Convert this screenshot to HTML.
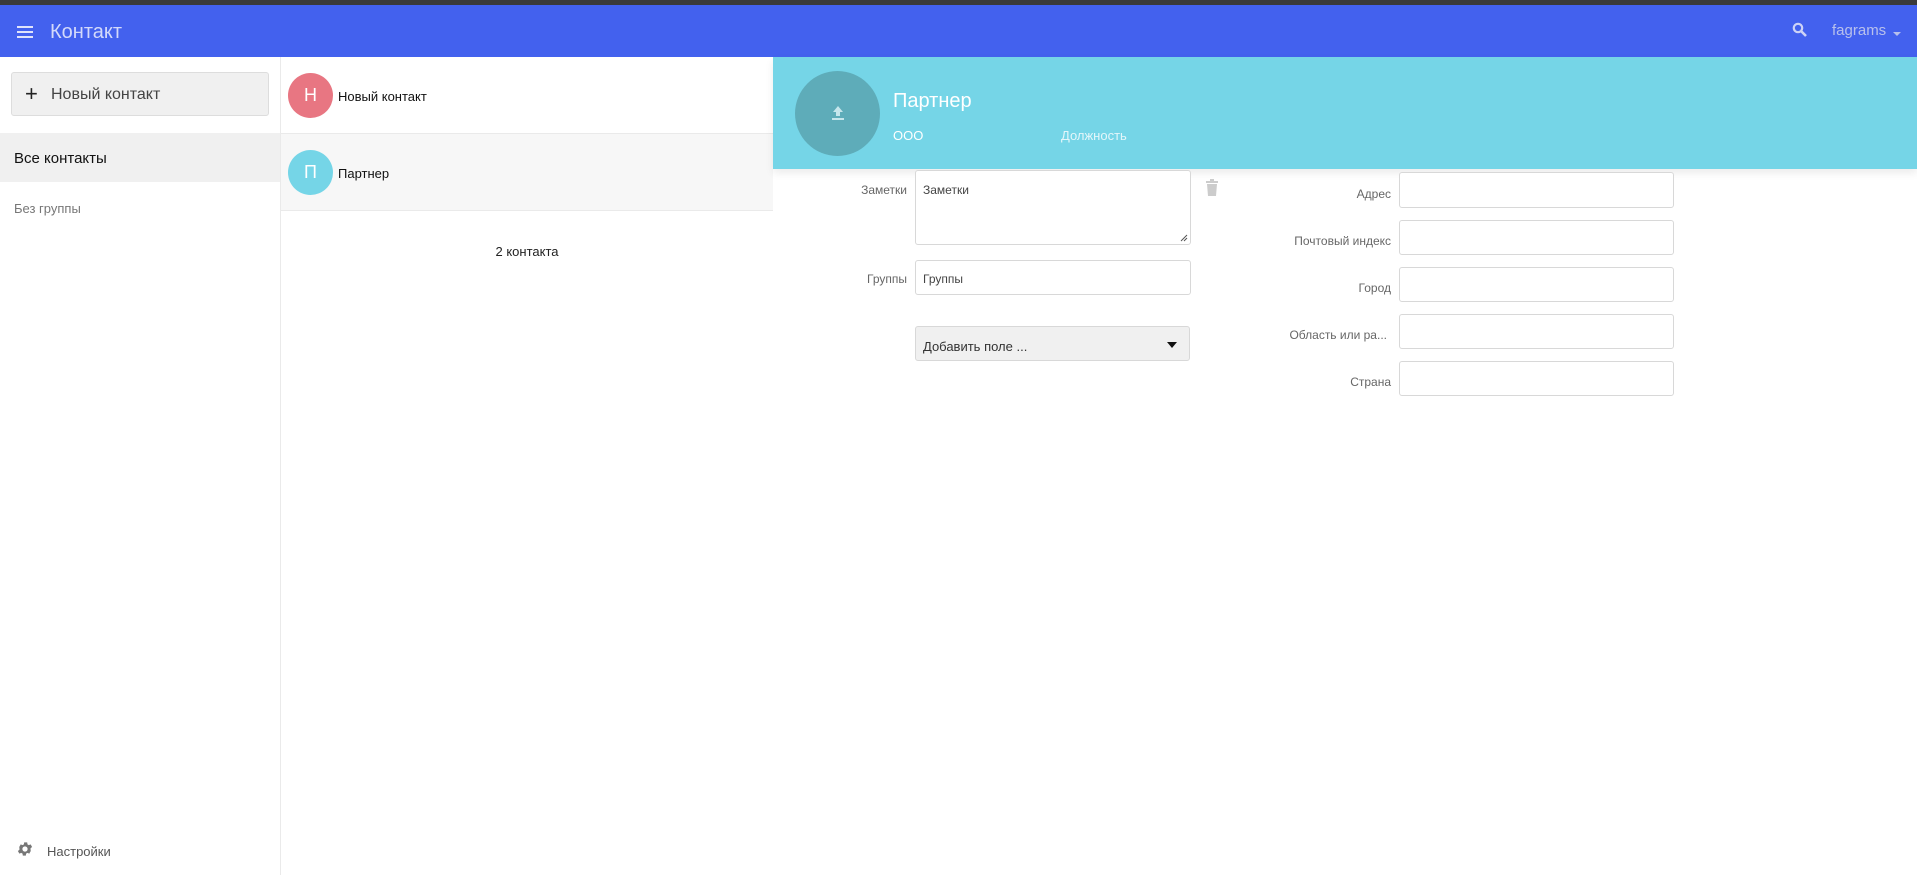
<!DOCTYPE html>
<html><head><meta charset="utf-8"><style>
*{box-sizing:border-box;margin:0;padding:0}
body{width:1917px;height:875px;overflow:hidden;background:#fff;font-family:"Liberation Sans","Noto Sans CJK SC",sans-serif;position:relative;color:#222}
.a{position:absolute}
.topdark{left:0;top:0;width:1917px;height:5px;background:#3a3a3a}
.hdr{left:0;top:5px;width:1917px;height:52px;background:#4361ee}
.inp{position:absolute;border:1px solid #d8d8d8;border-radius:3px;background:#fff}
.lbl{position:absolute;font-size:12px;color:#666;text-align:right}
</style></head><body>
<div class="a topdark"></div>
<div class="a hdr"></div>
<div class="a" style="left:17px;top:26px;width:16px;height:2px;background:#dfe3fb"></div>
<div class="a" style="left:17px;top:31px;width:16px;height:2px;background:#dfe3fb"></div>
<div class="a" style="left:17px;top:36px;width:16px;height:2px;background:#dfe3fb"></div>
<div class="a" style="left:50px;top:21px;font-size:20px;color:#d3d9fa">Контакт</div>
<svg class="a" style="left:1792px;top:22px" width="16" height="16" viewBox="0 0 16 16"><circle cx="6" cy="6" r="4.2" fill="none" stroke="#cdd3f6" stroke-width="2.2"/><path d="M9 9l5 5" stroke="#cdd3f6" stroke-width="2.6"/></svg>
<div class="a" style="left:1832px;top:22px;font-size:15px;color:#b8c0ec">fagrams</div>
<div class="a" style="left:1893px;top:32px;border-left:4px solid transparent;border-right:4px solid transparent;border-top:4px solid #b8c0ec"></div>

<div class="a" style="left:280px;top:57px;width:1px;height:818px;background:#eaeaea"></div>
<div class="a" style="left:11px;top:72px;width:258px;height:44px;background:#f0f0f0;border:1px solid #ddd;border-radius:3px"></div>
<div class="a" style="left:25px;top:81px;font-size:22px;color:#222">+</div>
<div class="a" style="left:51px;top:86px;font-size:16px;color:#444">Новый контакт</div>
<div class="a" style="left:0;top:133px;width:280px;height:49px;background:#f0f0f0"></div>
<div class="a" style="left:14px;top:150px;font-size:15px;color:#111">Все контакты</div>
<div class="a" style="left:14px;top:201px;font-size:13px;color:#777">Без группы</div>
<svg class="a" style="left:16px;top:840px" width="18" height="18" viewBox="0 0 24 24"><path fill="#777" d="M19.4 13a7.5 7.5 0 0 0 0-2l2.1-1.6-2-3.5-2.5 1a7 7 0 0 0-1.7-1l-.4-2.7h-4l-.4 2.7a7 7 0 0 0-1.7 1l-2.5-1-2 3.5L4.6 11a7.5 7.5 0 0 0 0 2l-2.1 1.6 2 3.5 2.5-1a7 7 0 0 0 1.7 1l.4 2.7h4l.4-2.7a7 7 0 0 0 1.7-1l2.5 1 2-3.5zM12 15.5a3.5 3.5 0 1 1 0-7 3.5 3.5 0 0 1 0 7z"/></svg>
<div class="a" style="left:47px;top:844px;font-size:13px;color:#555">Настройки</div>

<div class="a" style="left:281px;top:133px;width:492px;height:1px;background:#eaeaea"></div>
<div class="a" style="left:281px;top:134px;width:492px;height:76px;background:#f7f7f7"></div>
<div class="a" style="left:281px;top:210px;width:492px;height:1px;background:#eaeaea"></div>
<div class="a" style="left:288px;top:73px;width:45px;height:45px;border-radius:50%;background:#e87682;color:#fff;font-size:18px;text-align:center;line-height:45px">Н</div>
<div class="a" style="left:338px;top:89px;font-size:13px;color:#111">Новый контакт</div>
<div class="a" style="left:288px;top:150px;width:45px;height:45px;border-radius:50%;background:#75d5e7;color:#fff;font-size:18px;text-align:center;line-height:45px">П</div>
<div class="a" style="left:338px;top:166px;font-size:13px;color:#111">Партнер</div>
<div class="a" style="left:281px;top:244px;width:492px;text-align:center;font-size:13px;color:#222">2 контакта</div>

<div class="a" style="left:773px;top:57px;width:1144px;height:112px;background:#75d5e7;box-shadow:0 4px 8px rgba(0,0,0,0.08)"></div>
<div class="a" style="left:795px;top:71px;width:85px;height:85px;border-radius:50%;background:#5eacb9"></div>
<svg class="a" style="left:830px;top:104px" width="16" height="18" viewBox="0 0 16 18"><path d="M8 2l5 6H10v4H6V8H3z" fill="#c6e6ec"/><rect x="2" y="14" width="12" height="2" fill="#c6e6ec"/></svg>
<div class="a" style="left:893px;top:90px;font-size:20px;color:#fff">Партнер</div>
<div class="a" style="left:893px;top:128px;font-size:13px;color:#fff">ООО</div>
<div class="a" style="left:1061px;top:128px;font-size:13px;color:#e3f6fa">Должность</div>

<div class="lbl" style="left:820px;width:87px;top:183px">Заметки</div>
<div class="inp" style="left:915px;top:170px;width:276px;height:75px"></div>
<div class="a" style="left:923px;top:183px;font-size:12px;color:#444">Заметки</div>
<svg class="a" style="left:1180px;top:234px" width="8" height="8"><path d="M1 7L7 1M4 7L7 4" stroke="#555" stroke-width="1"/></svg>
<svg class="a" style="left:1205px;top:179px" width="14" height="17" viewBox="0 0 14 17"><rect x="1" y="2" width="12" height="2" fill="#ccc"/><rect x="5" y="0" width="4" height="2" fill="#ccc"/><path d="M2 5h10l-1 12H3z" fill="#ccc"/></svg>
<div class="lbl" style="left:820px;width:87px;top:272px">Группы</div>
<div class="inp" style="left:915px;top:260px;width:276px;height:35px"></div>
<div class="a" style="left:923px;top:272px;font-size:12px;color:#444">Группы</div>
<div class="inp" style="left:915px;top:326px;width:275px;height:35px;background:#f0f0f0"></div>
<div class="a" style="left:923px;top:339px;font-size:13px;color:#333">Добавить поле ...</div>
<div class="a" style="left:1167px;top:342px;border-left:5px solid transparent;border-right:5px solid transparent;border-top:6px solid #111"></div>

<div class="lbl" style="left:1250px;width:141px;top:187px">Адрес</div>
<div class="inp" style="left:1399px;top:172px;width:275px;height:36px"></div>
<div class="lbl" style="left:1250px;width:141px;top:234px">Почтовый индекс</div>
<div class="inp" style="left:1399px;top:220px;width:275px;height:35px"></div>
<div class="lbl" style="left:1250px;width:141px;top:281px">Город</div>
<div class="inp" style="left:1399px;top:267px;width:275px;height:35px"></div>
<div class="lbl" style="left:1250px;width:137px;top:328px">Область или ра...</div>
<div class="inp" style="left:1399px;top:314px;width:275px;height:35px"></div>
<div class="lbl" style="left:1250px;width:141px;top:375px">Страна</div>
<div class="inp" style="left:1399px;top:361px;width:275px;height:35px"></div>
</body></html>
